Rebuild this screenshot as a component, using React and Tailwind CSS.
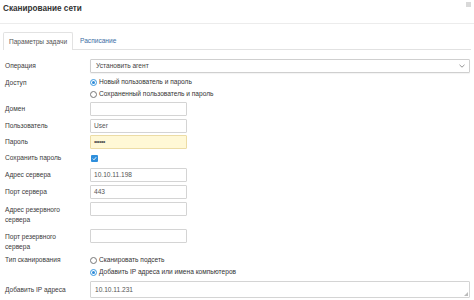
import React from "react";

const font = { fontFamily: '"Liberation Sans", Arial, sans-serif' };

function Label({ children, className = "" }) {
  return (
    <div className={"w-[90px] shrink-0 pl-[5px] pr-[8px] text-[6.6px] leading-[10px] text-[#3a3a3a] " + className}>
      {children}
    </div>
  );
}

function Input({ value = "", className = "", w = "w-[97px]" }) {
  return (
    <div
      className={
        "h-[14px] border border-[#d4d4d4] rounded-[1px] flex items-center px-[3px] text-[6.6px] text-[#555] " +
        w +
        " " +
        className
      }
    >
      {value}
    </div>
  );
}

function Radio({ checked, children }) {
  return (
    <div className="flex items-center h-[12px] gap-[2px] text-[6.6px] text-[#333]">
      <span
        className={
          "w-[7px] h-[7px] rounded-full border flex items-center justify-center bg-white " +
          (checked ? "border-[#3b9ae1]" : "border-[#777]")
        }
      >
        {checked && <span className="w-[3px] h-[3px] rounded-full bg-[#2d8ad8]" />}
      </span>
      <span>{children}</span>
    </div>
  );
}

export default function App() {
  return (
    <div className="w-[474px] h-[300px] bg-white overflow-hidden relative" style={font}>
      <div className="h-[24px] border-b border-[#ececec] flex items-center pl-[3px]">
        <span className="text-[8.2px] font-bold text-[#333] -mt-[4px]">Сканирование сети</span>
      </div>
      <div className="absolute right-[3px] top-[2px] w-[5px] h-[5px] bg-[#d9d9d9]" />

      <div className="mt-[8px] mx-[3px] border-b border-[#e2e2e2] flex h-[18px]">
        <div className="w-[70px] h-[18px] border border-b-0 border-[#e2e2e2] bg-white flex items-center justify-center text-[6.6px] text-[#555] rounded-t-[2px] -mb-px">
          Параметры задачи
        </div>
        <div className="ml-[7px] flex items-center text-[6.6px] text-[#3b6ea5]">Расписание</div>
      </div>

      <div className="pt-[9px]">
        <div className="flex items-center h-[14px]">
          <Label>Операция</Label>
          <div className="w-[380px] h-[14px] border border-[#cfcfcf] rounded-[1px] flex items-center justify-between px-[5px] text-[6.6px] text-[#444] shadow-[0_1px_1px_rgba(0,0,0,0.05)]">
            <span>Установить агент</span>
            <svg width="6" height="4" viewBox="0 0 6 4" className="-mr-[1px]">
              <path d="M0.5 0.8 L3 3.2 L5.5 0.8" stroke="#888" strokeWidth="0.9" fill="none" />
            </svg>
          </div>
        </div>

        <div className="flex mt-[3px]">
          <Label className="pt-[2px]">Доступ</Label>
          <div>
            <Radio checked>Новый пользователь и пароль</Radio>
            <Radio>Сохраненный пользователь и пароль</Radio>
          </div>
        </div>

        <div className="flex items-center mt-[2px]">
          <Label>Домен</Label>
          <Input />
        </div>
        <div className="flex items-center mt-[3px]">
          <Label>Пользователь</Label>
          <Input value="User" />
        </div>
        <div className="flex items-center mt-[2px]">
          <Label>Пароль</Label>
          <Input value="••••••" className="bg-[#fff8d6] border-[#ecdca5] text-[5.5px] tracking-[-0.5px]" />
        </div>
        <div className="flex items-center h-[12px] mt-[3px]">
          <Label>Сохранить пароль</Label>
          <div className="w-[7px] h-[7px] rounded-[1px] bg-[#2f8fdc] flex items-center justify-center ml-[1px]">
            <svg width="5" height="5" viewBox="0 0 5 5">
              <path d="M0.8 2.6 L2 3.8 L4.2 1.2" stroke="white" strokeWidth="0.9" fill="none" />
            </svg>
          </div>
        </div>
        <div className="flex items-center mt-[4px]">
          <Label>Адрес сервера</Label>
          <Input value="10.10.11.198" />
        </div>
        <div className="flex items-center mt-[3px]">
          <Label>Порт сервера</Label>
          <Input value="443" />
        </div>
        <div className="flex items-start mt-[3px] h-[24px]">
          <Label className="pt-[3px]">Адрес резервного сервера</Label>
          <Input />
        </div>
        <div className="flex items-start mt-[3px] h-[24px]">
          <Label className="pt-[3px]">Порт резервного сервера</Label>
          <Input />
        </div>
        <div className="flex mt-[1px]">
          <Label className="pt-[1px]">Тип сканирования</Label>
          <div>
            <Radio>Сканировать подсеть</Radio>
            <Radio checked>Добавить IP адреса или имена компьютеров</Radio>
          </div>
        </div>
        <div className="flex items-center mt-[3px]">
          <Label>Добавить IP адреса</Label>
          <div className="relative w-[380px] h-[17px] border border-[#d4d4d4] rounded-[1px] flex items-center px-[4px] text-[6.6px] text-[#555]">
            10.10.11.231
            <svg width="4" height="4" viewBox="0 0 4 4" className="absolute right-[1px] bottom-[1px]">
              <path d="M4 0 L4 4 L0 4 Z" fill="#bbb" />
            </svg>
          </div>
        </div>
      </div>
    </div>
  );
}
